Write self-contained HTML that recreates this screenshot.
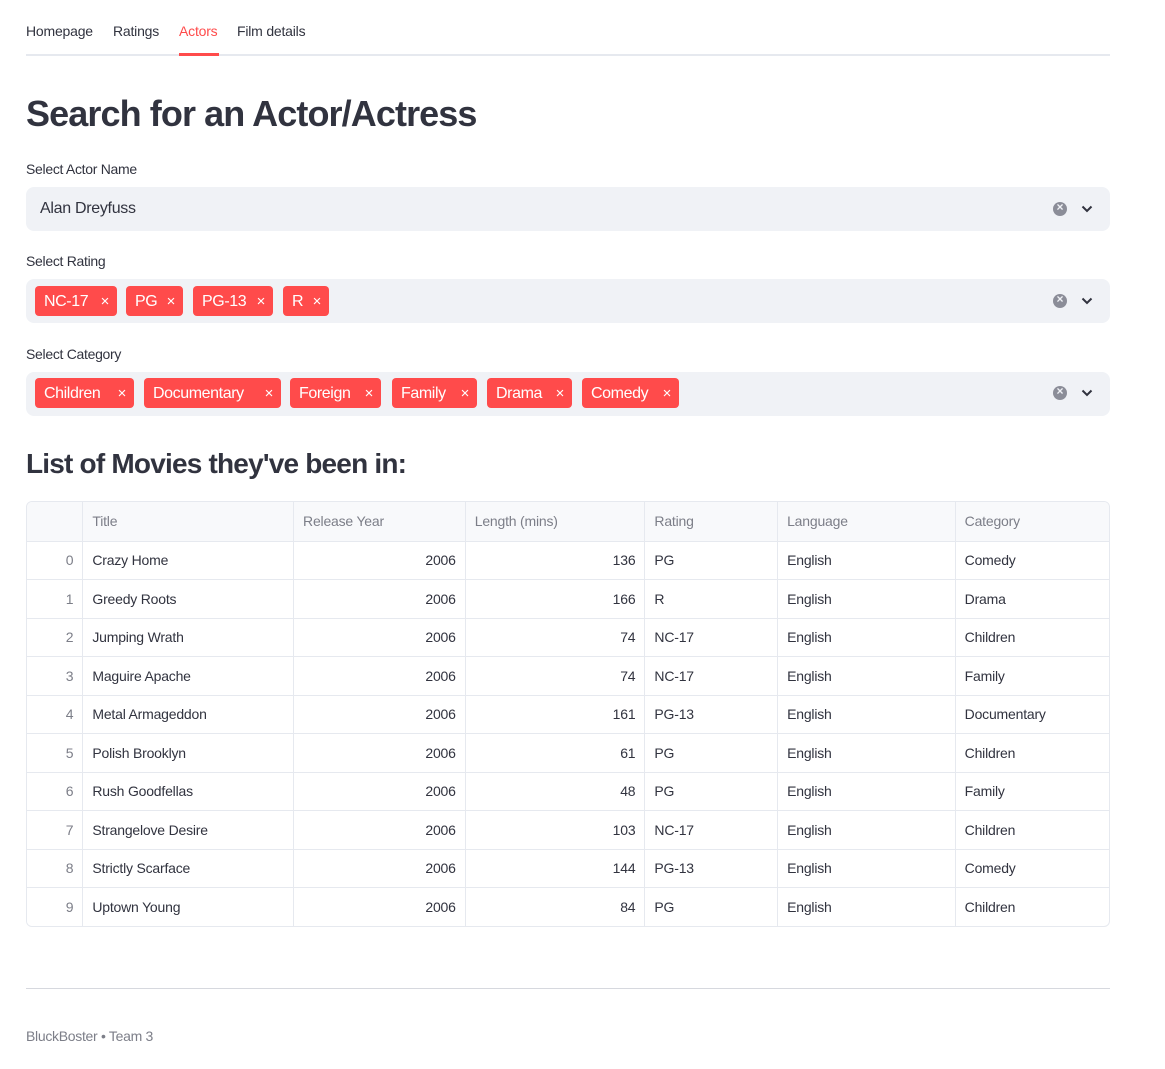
<!DOCTYPE html>
<html><head><meta charset="utf-8"><style>
*{box-sizing:border-box;margin:0;padding:0}
body{width:1165px;height:1069px;background:#fff;font-family:"Liberation Sans",sans-serif;color:#31333f;position:relative;overflow:hidden}
.a{position:absolute;white-space:nowrap}
.tab{top:23px;font-size:14px;letter-spacing:-0.2px}
.lbl{font-size:14px;letter-spacing:-0.3px}
.box{left:26px;width:1084px;height:44px;background:#f0f2f6;border-radius:8px}
.tag{height:30px;background:#ff4b4b;color:#fff;border-radius:4px;font-size:16px;line-height:31px;padding-left:9px;letter-spacing:-0.4px}
.tag b{position:absolute;right:8px;top:0;font-weight:normal;font-size:15px}
.clr{width:14px;height:14px;border-radius:50%;background:#8b8d98;left:1053px}
.clr:after{content:"×";position:absolute;left:0;top:-2px;width:14px;text-align:center;color:#f0f2f6;font-size:12px;font-weight:bold}
.tbl{left:26px;top:501px;width:1084px;height:426px;border:1px solid #e6e9ef;border-radius:6px;overflow:hidden}
table{border-collapse:collapse;font-size:14px;letter-spacing:-0.2px}
td{height:38.5px;border-right:1px solid #e6e9ef;border-bottom:1px solid #e6e9ef;padding:0 9px;white-space:nowrap;overflow:hidden}
tr:first-child td{background:#f8f9fb;color:#7c7e88;height:39px}
td:first-child{color:#7c7e88;text-align:right;background:#fff}
tr:first-child td:first-child{background:#f8f9fb}
td.r{text-align:right}
tr:last-child td{border-bottom:none}
td:last-child{border-right:none}
</style></head><body>
<div class="a tab" style="left:26px">Homepage</div>
<div class="a tab" style="left:113px">Ratings</div>
<div class="a tab" style="left:179px;color:#ff4b4b">Actors</div>
<div class="a tab" style="left:237px">Film details</div>
<div class="a" style="left:26px;top:54px;width:1084px;height:2px;background:#e6e9ef"></div>
<div class="a" style="left:179px;top:53px;width:40px;height:3px;background:#ff4b4b"></div>

<div class="a" style="left:26px;top:93px;font-size:36px;font-weight:bold;letter-spacing:-0.9px">Search for an Actor/Actress</div>

<div class="a lbl" style="left:26px;top:161px">Select Actor Name</div>
<div class="a box" style="top:187px"></div>
<div class="a" style="left:40px;top:200px;font-size:16px;letter-spacing:-0.3px">Alan Dreyfuss</div>

<div class="a lbl" style="left:26px;top:253px">Select Rating</div>
<div class="a box" style="top:279px"></div>
<div class="a tag" style="left:35px;top:286px;width:82px">NC-17<b>×</b></div>
<div class="a tag" style="left:126px;top:286px;width:57px">PG<b>×</b></div>
<div class="a tag" style="left:193px;top:286px;width:80px">PG-13<b>×</b></div>
<div class="a tag" style="left:283px;top:286px;width:46px">R<b>×</b></div>

<div class="a lbl" style="left:26px;top:346px">Select Category</div>
<div class="a box" style="top:372px"></div>
<div class="a tag" style="left:35px;top:378px;width:99px">Children<b>×</b></div>
<div class="a tag" style="left:144px;top:378px;width:137px">Documentary<b>×</b></div>
<div class="a tag" style="left:290px;top:378px;width:91px">Foreign<b>×</b></div>
<div class="a tag" style="left:392px;top:378px;width:85px">Family<b>×</b></div>
<div class="a tag" style="left:487px;top:378px;width:85px">Drama<b>×</b></div>
<div class="a tag" style="left:582px;top:378px;width:97px">Comedy<b>×</b></div>

<div class="a clr" style="top:202px"></div>
<div class="a clr" style="top:294px"></div>
<div class="a clr" style="top:386px"></div>
<svg class="a" style="left:1081px;top:204px" width="12" height="10" viewBox="0 0 12 10"><path d="M1.5 2.5 6 7 10.5 2.5" fill="none" stroke="#31333f" stroke-width="2"/></svg>
<svg class="a" style="left:1081px;top:296px" width="12" height="10" viewBox="0 0 12 10"><path d="M1.5 2.5 6 7 10.5 2.5" fill="none" stroke="#31333f" stroke-width="2"/></svg>
<svg class="a" style="left:1081px;top:388px" width="12" height="10" viewBox="0 0 12 10"><path d="M1.5 2.5 6 7 10.5 2.5" fill="none" stroke="#31333f" stroke-width="2"/></svg>

<div class="a" style="left:26px;top:448px;font-size:28px;font-weight:bold;letter-spacing:-0.8px">List of Movies they've been in:</div>

<div class="a tbl"><table>
<colgroup><col style="width:56px"><col style="width:211px"><col style="width:172px"><col style="width:180px"><col style="width:133px"><col style="width:178px"><col style="width:154px"></colgroup>
<tr><td></td><td>Title</td><td>Release Year</td><td>Length (mins)</td><td>Rating</td><td>Language</td><td>Category</td></tr>
<tr><td>0</td><td>Crazy Home</td><td class="r">2006</td><td class="r">136</td><td>PG</td><td>English</td><td>Comedy</td></tr>
<tr><td>1</td><td>Greedy Roots</td><td class="r">2006</td><td class="r">166</td><td>R</td><td>English</td><td>Drama</td></tr>
<tr><td>2</td><td>Jumping Wrath</td><td class="r">2006</td><td class="r">74</td><td>NC-17</td><td>English</td><td>Children</td></tr>
<tr><td>3</td><td>Maguire Apache</td><td class="r">2006</td><td class="r">74</td><td>NC-17</td><td>English</td><td>Family</td></tr>
<tr><td>4</td><td>Metal Armageddon</td><td class="r">2006</td><td class="r">161</td><td>PG-13</td><td>English</td><td>Documentary</td></tr>
<tr><td>5</td><td>Polish Brooklyn</td><td class="r">2006</td><td class="r">61</td><td>PG</td><td>English</td><td>Children</td></tr>
<tr><td>6</td><td>Rush Goodfellas</td><td class="r">2006</td><td class="r">48</td><td>PG</td><td>English</td><td>Family</td></tr>
<tr><td>7</td><td>Strangelove Desire</td><td class="r">2006</td><td class="r">103</td><td>NC-17</td><td>English</td><td>Children</td></tr>
<tr><td>8</td><td>Strictly Scarface</td><td class="r">2006</td><td class="r">144</td><td>PG-13</td><td>English</td><td>Comedy</td></tr>
<tr><td>9</td><td>Uptown Young</td><td class="r">2006</td><td class="r">84</td><td>PG</td><td>English</td><td>Children</td></tr>
</table></div>

<div class="a" style="left:26px;top:988px;width:1084px;height:1px;background:#d6d8de"></div>
<div class="a" style="left:26px;top:1028px;font-size:14px;color:#7c7e88;letter-spacing:-0.3px">BluckBoster • Team 3</div>
</body></html>
